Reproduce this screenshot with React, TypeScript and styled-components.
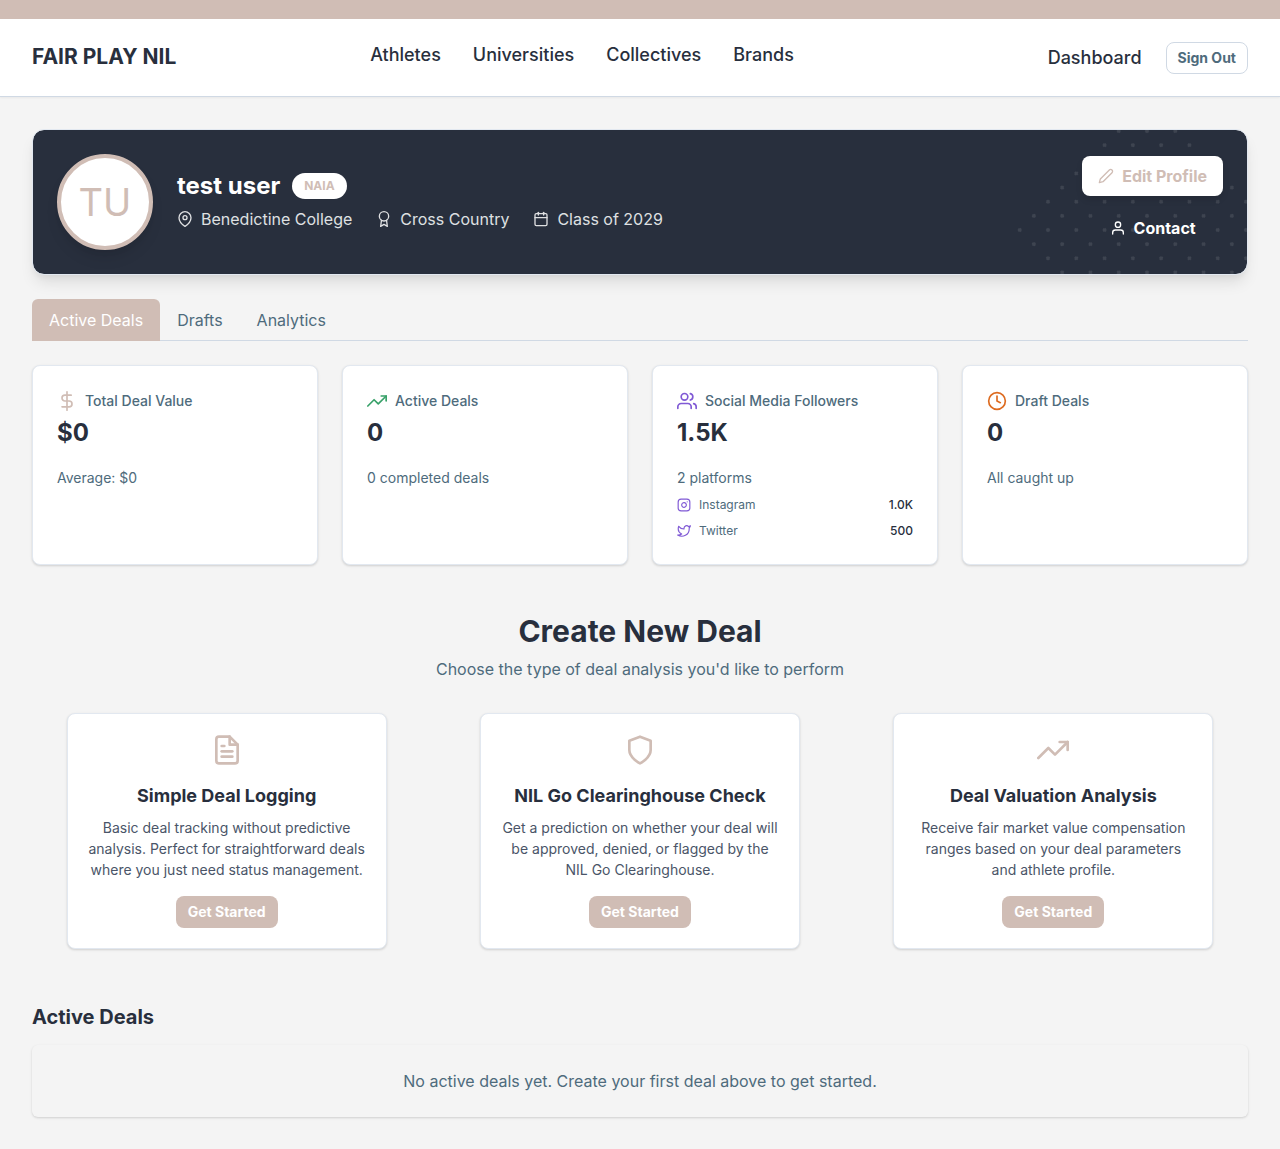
import React from 'react';
import styled, { createGlobalStyle } from 'styled-components';
import {
  FiAward,
  FiCalendar,
  FiClock,
  FiDollarSign,
  FiEdit2,
  FiFileText,
  FiInstagram,
  FiMapPin,
  FiShield,
  FiTrendingUp,
  FiTwitter,
  FiUser,
  FiUsers,
} from 'react-icons/fi';
import type { IconType } from 'react-icons';

const color = {
  accent: '#d0bdb5',
  ink: '#282f3d',
  slate: '#4e6b7c',
  body: '#4a5568',
  page: '#f4f4f4',
  line: '#d0d9e4',
  cardLine: '#e2e8f0',
  green: '#38a169',
  purple: '#805ad5',
  orange: '#dd6b20',
};

const GlobalStyle = createGlobalStyle`
  *, *::before, *::after { box-sizing: border-box; }
  body {
    margin: 0;
    background: ${color.page};
    color: ${color.ink};
    font-family: Inter, sans-serif;
    font-size: 16px;
    line-height: 24px;
  }
  h1, h2, h3, p, ul, dl, dd { margin: 0; padding: 0; }
  ul { list-style: none; }
  button { font: inherit; cursor: pointer; }
  a { color: inherit; text-decoration: none; }
  svg { flex-shrink: 0; display: block; }
`;

const TopStrip = styled.div`
  height: 19px;
  background: ${color.accent};
`;

const Header = styled.header`
  display: flex;
  align-items: flex-start;
  padding: 23px 32px 22px;
  background: #fff;
  border-bottom: 1px solid ${color.line};
  box-shadow: 0 1px 2px rgba(0, 0, 0, 0.05);
`;

const Brand = styled.a`
  font-size: 21px;
  font-weight: 700;
  line-height: 30px;
`;

const Nav = styled.nav`
  flex: 1;
  display: flex;
  justify-content: center;
  gap: 32px;
`;

const NavLink = styled.a`
  font-size: 18px;
  font-weight: 500;
  line-height: 26px;
`;

const Account = styled.div`
  display: flex;
  align-items: center;
  gap: 24px;
  padding-left: 60px;
`;

type ButtonKind = 'outline' | 'solid' | 'light' | 'ghost';

const buttonLook: Record<ButtonKind, string> = {
  outline: `background: transparent; color: ${color.slate}; border-color: ${color.line};`,
  solid: `background: ${color.accent}; color: #fff;`,
  light: `background: #fff; color: ${color.accent}; box-shadow: 0 4px 6px rgba(0, 0, 0, 0.1);`,
  ghost: 'background: transparent; color: #fff;',
};

const Button = styled.button<{ $kind: ButtonKind; $large?: boolean }>`
  display: inline-flex;
  align-items: center;
  justify-content: center;
  gap: 8px;
  height: ${(p) => (p.$large ? 40 : 32)}px;
  padding: 0 ${(p) => (p.$large ? 15 : 11)}px;
  border: 1px solid transparent;
  border-radius: 8px;
  font-size: ${(p) => (p.$large ? 16 : 14)}px;
  font-weight: 700;
  line-height: 20px;
  ${(p) => buttonLook[p.$kind]}
`;

const Main = styled.main`
  padding: 32px;
`;

const Hero = styled.section`
  position: relative;
  overflow: hidden;
  display: flex;
  align-items: center;
  gap: 24px;
  padding: 24px;
  background: ${color.ink};
  background-clip: padding-box;
  border: 1px solid ${color.cardLine};
  border-radius: 12px;
  box-shadow: 0 10px 15px -3px rgba(0, 0, 0, 0.1), 0 4px 6px -2px rgba(0, 0, 0, 0.05);
`;

const HeroDots = styled.div`
  position: absolute;
  top: 0;
  right: 0;
  width: 200px;
  height: 200px;
  opacity: 0.1;
  background-image: radial-gradient(circle, #fff 2px, transparent 2px);
  background-size: 20px 20px;
  transform: rotate(45deg);
`;

const Avatar = styled.div`
  display: flex;
  align-items: center;
  justify-content: center;
  width: 96px;
  height: 96px;
  border: 4px solid ${color.accent};
  border-radius: 50%;
  background: #fff;
  color: ${color.accent};
  font-size: 38px;
  line-height: 48px;
  box-shadow: 0 10px 15px -3px rgba(0, 0, 0, 0.1), 0 4px 6px -2px rgba(0, 0, 0, 0.05);
`;

const Identity = styled.div`
  flex: 1;
  display: flex;
  flex-direction: column;
  gap: 8px;
`;

const NameRow = styled.div`
  display: flex;
  align-items: center;
  gap: 12px;
`;

const Name = styled.h1`
  color: #fff;
  font-size: 24px;
  font-weight: 700;
  line-height: 26px;
`;

const Badge = styled.span`
  padding: 4px 12px;
  border-radius: 13px;
  background: #fff;
  color: ${color.accent};
  font-size: 12px;
  font-weight: 700;
  line-height: 18px;
`;

const Facts = styled.ul`
  display: flex;
  gap: 24px;
  color: #dfe0e2;
`;

const Fact = styled.li`
  display: flex;
  align-items: center;
  gap: 8px;
`;

const HeroActions = styled.div`
  position: relative;
  display: flex;
  flex-direction: column;
  gap: 12px;
`;

const Tabs = styled.div`
  display: flex;
  margin-top: 24px;
  border-bottom: 1px solid ${color.line};
`;

const Tab = styled.button<{ $active?: boolean }>`
  height: 42px;
  margin-bottom: -1px;
  padding: 0 17px;
  border: 0;
  border-radius: 6px 6px 0 0;
  background: ${(p) => (p.$active ? color.accent : 'transparent')};
  color: ${(p) => (p.$active ? '#fff' : color.slate)};
`;

const Stats = styled.section`
  display: grid;
  grid-template-columns: repeat(4, 1fr);
  gap: 24px;
  margin-top: 24px;
`;

const Card = styled.article`
  background: #fff;
  border: 1px solid ${color.cardLine};
  border-radius: 8px;
  box-shadow: 0 1px 3px rgba(0, 0, 0, 0.1), 0 1px 2px rgba(0, 0, 0, 0.06);
`;

const StatCard = styled(Card)`
  padding: 24px;
`;

const StatLabel = styled.h2`
  display: flex;
  align-items: center;
  gap: 8px;
  color: ${color.slate};
  font-size: 14px;
  font-weight: 500;
  line-height: 21px;
`;

const StatValue = styled.p`
  margin-top: 4px;
  font-size: 24px;
  font-weight: 700;
  line-height: 36px;
`;

const StatNote = styled.p`
  margin-top: 16px;
  color: ${color.slate};
  font-size: 14px;
  line-height: 21px;
`;

const Platforms = styled.dl`
  display: grid;
  gap: 8px;
  margin-top: 8px;
  font-size: 12px;
  line-height: 18px;
`;

const Platform = styled.div`
  display: flex;
  align-items: center;
  justify-content: space-between;
  dt { display: flex; align-items: center; gap: 8px; color: ${color.slate}; }
  dd { font-weight: 500; }
  svg { color: ${color.purple}; }
`;

const SectionIntro = styled.header`
  margin: 48px 0 32px;
  text-align: center;
`;

const IntroTitle = styled.h2`
  font-size: 30px;
  font-weight: 700;
  line-height: 36px;
`;

const IntroText = styled.p`
  margin-top: 8px;
  color: ${color.slate};
`;

const Options = styled.section`
  display: grid;
  grid-template-columns: repeat(3, 1fr);
  gap: 24px;
  justify-items: center;
`;

const OptionCard = styled(Card)`
  display: flex;
  flex-direction: column;
  align-items: center;
  width: 100%;
  max-width: 320px;
  padding: 20px;
  text-align: center;
  svg { color: ${color.accent}; }
`;

const OptionTitle = styled.h3`
  margin-top: 16px;
  font-size: 18px;
  font-weight: 700;
  line-height: 27px;
`;

const OptionText = styled.p`
  margin: 8px 0 16px;
  color: ${color.body};
  font-size: 14px;
  line-height: 21px;
`;

const ListTitle = styled.h2`
  margin: 56px 0 16px;
  font-size: 20px;
  font-weight: 700;
  line-height: 24px;
`;

const Empty = styled.p`
  padding: 24px;
  border-radius: 6px;
  color: ${color.slate};
  text-align: center;
  box-shadow: 0 1px 3px rgba(0, 0, 0, 0.1), 0 1px 2px rgba(0, 0, 0, 0.06);
`;

interface Stat {
  label: string;
  icon: IconType;
  tint: string;
  value: string;
  note: string;
  platforms?: { name: string; icon: IconType; count: string }[];
}

const stats: Stat[] = [
  { label: 'Total Deal Value', icon: FiDollarSign, tint: color.accent, value: '$0', note: 'Average: $0' },
  { label: 'Active Deals', icon: FiTrendingUp, tint: color.green, value: '0', note: '0 completed deals' },
  {
    label: 'Social Media Followers',
    icon: FiUsers,
    tint: color.purple,
    value: '1.5K',
    note: '2 platforms',
    platforms: [
      { name: 'Instagram', icon: FiInstagram, count: '1.0K' },
      { name: 'Twitter', icon: FiTwitter, count: '500' },
    ],
  },
  { label: 'Draft Deals', icon: FiClock, tint: color.orange, value: '0', note: 'All caught up' },
];

const options: { title: string; icon: IconType; text: string }[] = [
  {
    title: 'Simple Deal Logging',
    icon: FiFileText,
    text: 'Basic deal tracking without predictive analysis. Perfect for straightforward deals where you just need status management.',
  },
  {
    title: 'NIL Go Clearinghouse Check',
    icon: FiShield,
    text: 'Get a prediction on whether your deal will be approved, denied, or flagged by the NIL Go Clearinghouse.',
  },
  {
    title: 'Deal Valuation Analysis',
    icon: FiTrendingUp,
    text: 'Receive fair market value compensation ranges based on your deal parameters and athlete profile.',
  },
];

const facts: { icon: IconType; text: string }[] = [
  { icon: FiMapPin, text: 'Benedictine College' },
  { icon: FiAward, text: 'Cross Country' },
  { icon: FiCalendar, text: 'Class of 2029' },
];

export default function App() {
  return (
    <>
      <GlobalStyle />
      <TopStrip />
      <Header>
        <Brand href="#">FAIR PLAY NIL</Brand>
        <Nav>
          {['Athletes', 'Universities', 'Collectives', 'Brands'].map((item) => (
            <NavLink key={item} href="#">{item}</NavLink>
          ))}
        </Nav>
        <Account>
          <NavLink href="#">Dashboard</NavLink>
          <Button type="button" $kind="outline">Sign Out</Button>
        </Account>
      </Header>
      <Main>
        <Hero>
          <HeroDots />
          <Avatar>TU</Avatar>
          <Identity>
            <NameRow>
              <Name>test user</Name>
              <Badge>NAIA</Badge>
            </NameRow>
            <Facts>
              {facts.map(({ icon: Icon, text }) => (
                <Fact key={text}>
                  <Icon size={16} />
                  {text}
                </Fact>
              ))}
            </Facts>
          </Identity>
          <HeroActions>
            <Button type="button" $kind="light" $large>
              <FiEdit2 size={16} />
              Edit Profile
            </Button>
            <Button type="button" $kind="ghost" $large>
              <FiUser size={16} />
              Contact
            </Button>
          </HeroActions>
        </Hero>

        <Tabs role="tablist">
          <Tab type="button" role="tab" aria-selected="true" $active>Active Deals</Tab>
          <Tab type="button" role="tab" aria-selected="false">Drafts</Tab>
          <Tab type="button" role="tab" aria-selected="false">Analytics</Tab>
        </Tabs>

        <Stats>
          {stats.map(({ label, icon: Icon, tint, value, note, platforms }) => (
            <StatCard key={label}>
              <StatLabel>
                <Icon size={20} color={tint} />
                {label}
              </StatLabel>
              <StatValue>{value}</StatValue>
              <StatNote>{note}</StatNote>
              {platforms && (
                <Platforms>
                  {platforms.map(({ name, icon: PlatformIcon, count }) => (
                    <Platform key={name}>
                      <dt>
                        <PlatformIcon size={14} />
                        {name}
                      </dt>
                      <dd>{count}</dd>
                    </Platform>
                  ))}
                </Platforms>
              )}
            </StatCard>
          ))}
        </Stats>

        <SectionIntro>
          <IntroTitle>Create New Deal</IntroTitle>
          <IntroText>Choose the type of deal analysis you'd like to perform</IntroText>
        </SectionIntro>

        <Options>
          {options.map(({ title, icon: Icon, text }) => (
            <OptionCard key={title}>
              <Icon size={32} />
              <OptionTitle>{title}</OptionTitle>
              <OptionText>{text}</OptionText>
              <Button type="button" $kind="solid">Get Started</Button>
            </OptionCard>
          ))}
        </Options>

        <ListTitle>Active Deals</ListTitle>
        <Empty>No active deals yet. Create your first deal above to get started.</Empty>
      </Main>
    </>
  );
}
